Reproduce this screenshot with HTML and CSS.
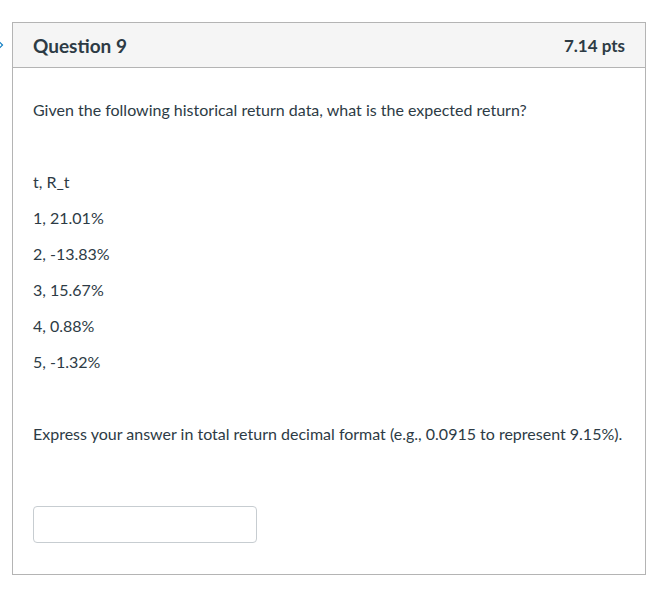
FILE: index.html
```html
<!DOCTYPE html>
<html lang="en">
<head>
<meta charset="utf-8">
<title>Question 9</title>
<link rel="stylesheet" href="styles.css">
</head>
<body>
<div class="page">
  <svg class="flag" width="6" height="12" viewBox="0 0 6 12"><path d="M-2 1.5 L2.5 6 L-2 10.5" fill="none" stroke="#0a7bc1" stroke-width="1.2"/></svg>
  <div class="question">
    <div class="header">
      <span class="title">Question 9</span>
      <span class="pts">7.14 pts</span>
    </div>
    <div class="content">
      <p>Given the following historical return data, what is the expected return?</p>
      <p>&nbsp;</p>
      <p>t, R_t</p>
      <p>1, 21.01%</p>
      <p>2, -13.83%</p>
      <p>3, 15.67%</p>
      <p>4, 0.88%</p>
      <p>5, -1.32%</p>
      <p>&nbsp;</p>
      <p>Express your answer in total return decimal format (e.g., 0.0915 to represent 9.15%).</p>
      <div class="answer"><input class="field" type="text" aria-label="Answer"></div>
    </div>
  </div>
</div>
</body>
</html>
```
FILE: styles.css
```css
html, body {
  margin: 0;
  padding: 0;
  background: #ffffff;
}
body {
  font-family: Lato, "Open Sans", sans-serif;
  color: #2d3b45;
}
.page {
  position: relative;
  padding: 22px 16px 0 12px;
}
.flag {
  position: absolute;
  left: 0;
  top: 39px;
}
.question {
  border: 1px solid #b4b4b4;
  width: 632px;
  background: #fff;
}
.header {
  display: flex;
  justify-content: space-between;
  align-items: center;
  height: 44px;
  padding: 0 20px 0 20px;
  background: #f5f5f5;
  border-bottom: 1px solid #b4b4b4;
}
.title {
  font-weight: bold;
  font-size: 19px;
  color: #2d3b45;
}
.pts {
  font-weight: bold;
  font-size: 17px;
  color: #2d3b45;
}
.content {
  padding: 18px 20px 31px 20px;
  font-size: 16px;
  line-height: 24px;
}
.content p {
  margin: 12px 0;
}
.answer {
  padding-top: 48px;
}
.field {
  display: block;
  box-sizing: border-box;
  width: 224px;
  height: 37px;
  border: 1px solid #c7cdd1;
  border-radius: 4px;
  background: #fff;
  margin: 0;
}
```
